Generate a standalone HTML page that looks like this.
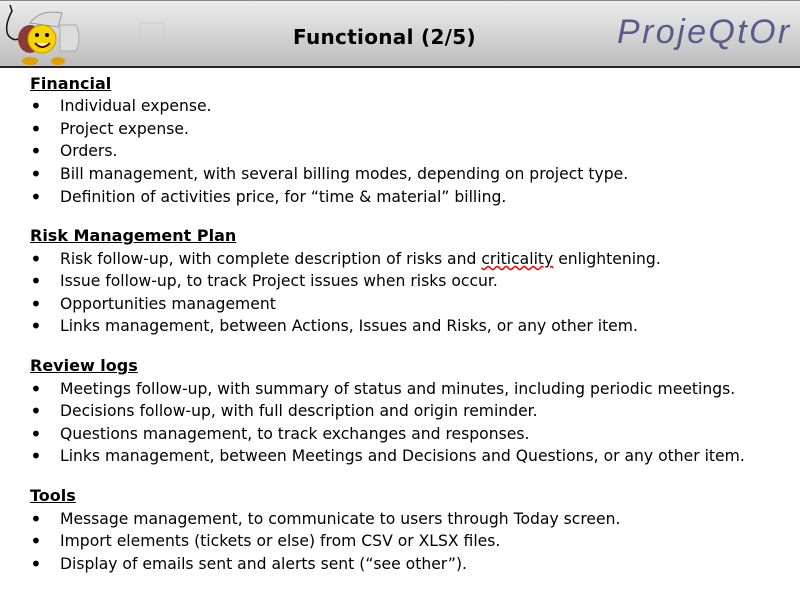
<!DOCTYPE html>
<html><head><style>
body{margin:0;width:800px;height:600px;background:#fff;overflow:hidden;position:relative;font-family:"DejaVu Sans","Liberation Sans",sans-serif;}
#hdr{position:absolute;left:0;top:0;width:800px;height:68px;background:linear-gradient(#ececec,#bdbdbd);border-top:1px solid #888;border-bottom:2px solid #222;box-sizing:border-box;}
#title{position:absolute;left:293px;top:24px;font-weight:bold;font-size:20px;color:#000;letter-spacing:0.3px}
#logo{position:absolute;left:617px;top:12px;font-family:"Liberation Sans",sans-serif;font-style:italic;font-size:34px;color:#5c5a8c;letter-spacing:2.4px;font-weight:300}
.l{position:absolute;font-size:15.6px;color:#000;white-space:nowrap;line-height:20px}
.h{left:30px;font-weight:bold;text-decoration:underline;font-size:16px}
.b{left:30px;font-size:20px}
.t{left:60px}
</style></head><body>
<div id="hdr">
<svg width="170" height="66" style="position:absolute;left:0;top:0">
<path d="M10 4 L12 10 Q4 25 8 34 Q14 42 22 36" stroke="#111" stroke-width="1.5" fill="none"/>
<path d="M30 22 Q40 8 62 12 L58 26 Z" fill="#ddd" stroke="#999"/>
<path d="M60 24 L76 24 Q82 36 76 50 L60 50 Z" fill="#ddd" stroke="#aaa"/>
<ellipse cx="30" cy="38" rx="12" ry="14" fill="#8b3a3a"/>
<circle cx="42" cy="38" r="14" fill="#f5d400" stroke="#c90" stroke-width="1"/>
<circle cx="37" cy="34" r="2" fill="#000"/><circle cx="47" cy="34" r="2" fill="#000"/>
<path d="M35 42 Q42 50 50 42" stroke="#600" stroke-width="2" fill="#fff"/>
<ellipse cx="30" cy="60" rx="8" ry="4" fill="#e0a000"/><ellipse cx="58" cy="60" rx="7" ry="4" fill="#e0a000"/>
<rect x="140" y="22" width="24" height="26" fill="none" stroke="#ccc"/>
</svg>
<div id="title">Functional (2/5)</div>
<div id="logo">ProjeQtOr</div>
</div>
<div class="l h" style="top:74px">Financial</div>
<div class="l b" style="top:96px">•</div><div class="l t" style="top:96px">Individual expense.</div>
<div class="l b" style="top:119px">•</div><div class="l t" style="top:119px">Project expense.</div>
<div class="l b" style="top:141px">•</div><div class="l t" style="top:141px">Orders.</div>
<div class="l b" style="top:164px">•</div><div class="l t" style="top:164px">Bill management, with several billing modes, depending on project type.</div>
<div class="l b" style="top:187px">•</div><div class="l t" style="top:187px">Definition of activities price, for “time &amp; material” billing.</div>
<div class="l h" style="top:226px">Risk Management Plan</div>
<div class="l b" style="top:249px">•</div><div class="l t" style="top:249px">Risk follow-up, with complete description of risks and <span style="text-decoration:underline wavy red">criticality</span> enlightening.</div>
<div class="l b" style="top:271px">•</div><div class="l t" style="top:271px">Issue follow-up, to track Project issues when risks occur.</div>
<div class="l b" style="top:294px">•</div><div class="l t" style="top:294px">Opportunities management</div>
<div class="l b" style="top:316px">•</div><div class="l t" style="top:316px">Links management, between Actions, Issues and Risks, or any other item.</div>
<div class="l h" style="top:356px">Review logs</div>
<div class="l b" style="top:379px">•</div><div class="l t" style="top:379px">Meetings follow-up, with summary of status and minutes, including periodic meetings.</div>
<div class="l b" style="top:401px">•</div><div class="l t" style="top:401px">Decisions follow-up, with full description and origin reminder.</div>
<div class="l b" style="top:424px">•</div><div class="l t" style="top:424px">Questions management, to track exchanges and responses.</div>
<div class="l b" style="top:446px">•</div><div class="l t" style="top:446px">Links management, between Meetings and Decisions and Questions, or any other item.</div>
<div class="l h" style="top:486px">Tools</div>
<div class="l b" style="top:509px">•</div><div class="l t" style="top:509px">Message management, to communicate to users through Today screen.</div>
<div class="l b" style="top:531px">•</div><div class="l t" style="top:531px">Import elements (tickets or else) from CSV or XLSX files.</div>
<div class="l b" style="top:554px">•</div><div class="l t" style="top:554px">Display of emails sent and alerts sent (“see other”).</div>
</body></html>
